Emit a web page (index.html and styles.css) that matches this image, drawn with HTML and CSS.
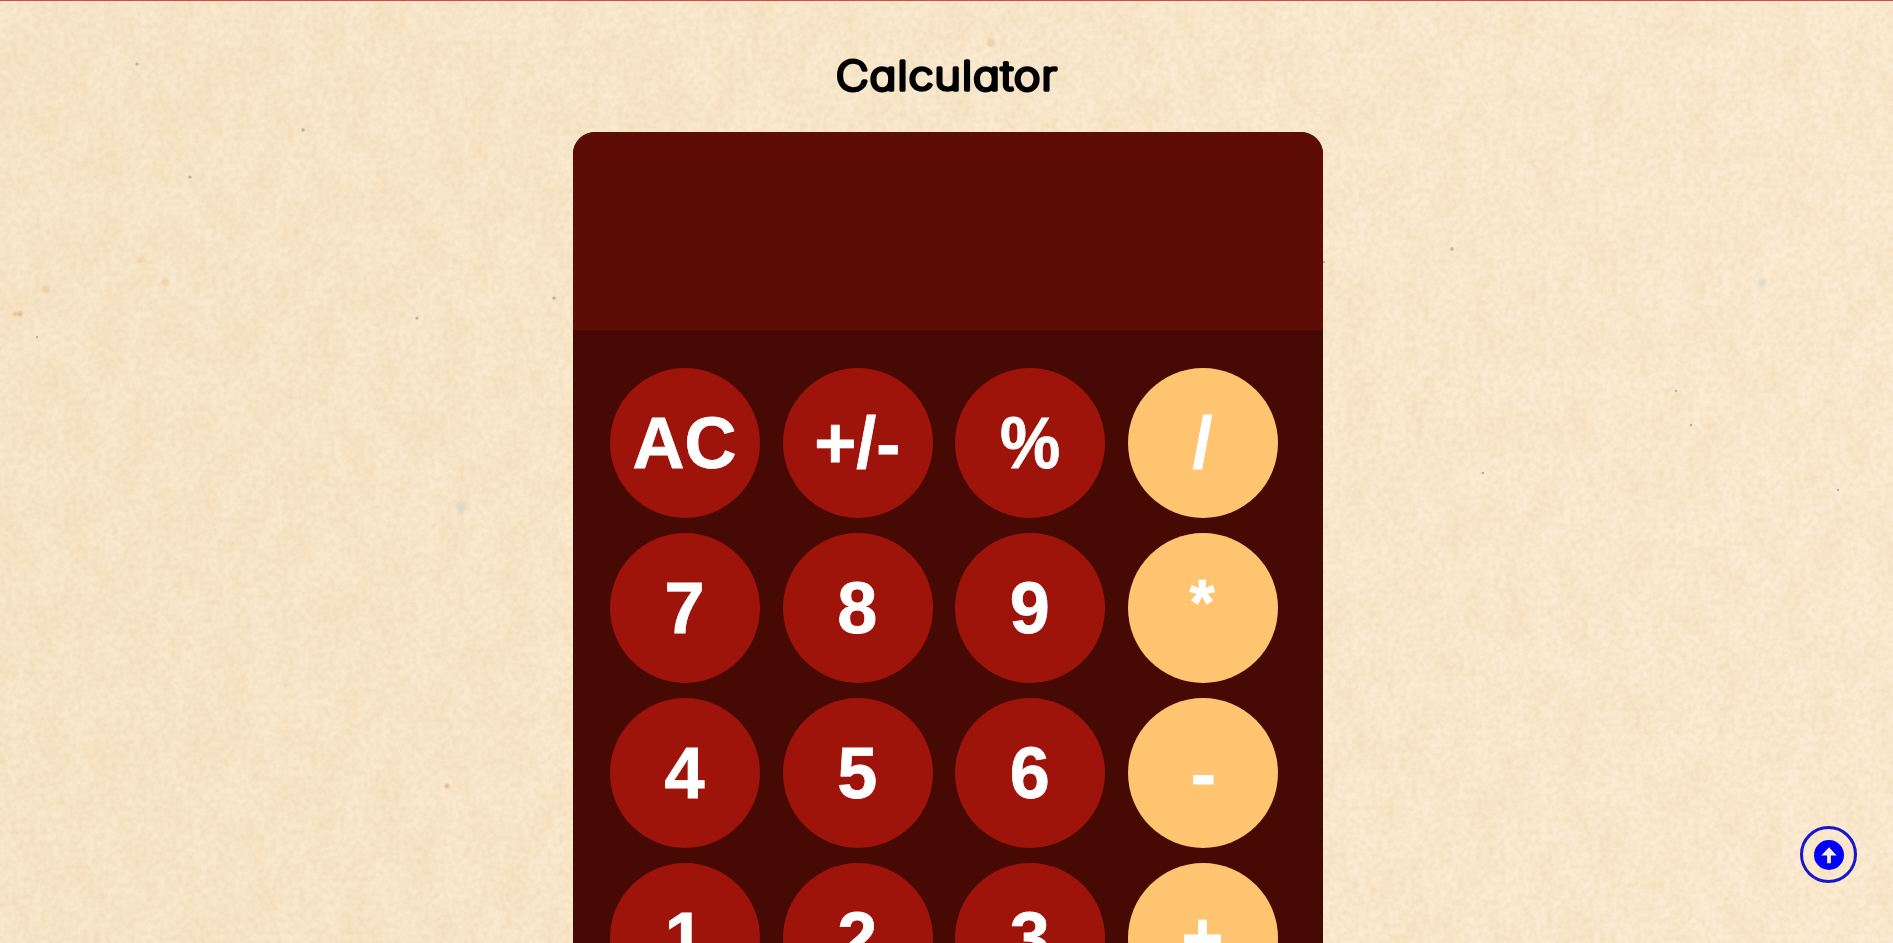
FILE: index.html
```html
<!DOCTYPE html>
<html lang="en">
<head>
<meta charset="utf-8">
<title>Calculator</title>
<link rel="stylesheet" href="styles.css">
</head>
<body>
<svg class="paper" width="1893" height="943" aria-hidden="true">
  <filter id="grain" x="0" y="0" width="100%" height="100%" color-interpolation-filters="sRGB">
    <feTurbulence type="fractalNoise" baseFrequency="0.17" numOctaves="4" seed="4"/>
    <feColorMatrix values="0 0 0 0 .86  0 0 0 0 .74  0 0 0 0 .52  .42 0 0 0 -.15"/>
    <feGaussianBlur stdDeviation="0.6"/>
  </filter>
  <filter id="blotch" x="0" y="0" width="100%" height="100%" color-interpolation-filters="sRGB">
    <feTurbulence type="fractalNoise" baseFrequency="0.032 0.022" numOctaves="4" seed="9"/>
    <feColorMatrix values="0 0 0 0 .93  0 0 0 0 .79  0 0 0 0 .58  .34 0 0 0 -.12"/>
  </filter>
  <linearGradient id="shade"><stop offset="0" stop-color="#f9e8cd"/><stop offset="1" stop-color="#fcecd4"/></linearGradient>
  <rect width="1893" height="943" fill="url(#shade)"/>
  <rect width="1893" height="943" filter="url(#blotch)"/>
  <rect width="1893" height="943" filter="url(#grain)"/>
  <g class="specks">
    <circle cx="137" cy="64" r="1.6"/><circle cx="303" cy="130" r="1.7"/><circle cx="190" cy="177" r="1.6"/>
    <circle cx="1452" cy="249" r="1.7"/><circle cx="1691" cy="425" r="1.3"/><circle cx="1838" cy="490" r="1.3"/>
    <circle cx="417" cy="318" r="1.6"/><circle cx="554" cy="298" r="1.6"/><circle cx="1483" cy="473" r="1.3"/>
    <circle cx="1324" cy="262" r="1.3"/><circle cx="37" cy="337" r="1.2"/><circle cx="1676" cy="391" r="1.3"/>
  </g>
  <g class="specks warm">
    <circle cx="15" cy="314" r="1.8"/><circle cx="20" cy="314" r="2"/><circle cx="447" cy="786" r="2"/>
    <circle cx="140" cy="260" r="3" opacity=".3"/><circle cx="46" cy="289" r="4" opacity=".3"/><circle cx="165" cy="283" r="4" opacity=".3"/>
    <circle cx="991" cy="43" r="4" opacity=".4"/>
  </g>
  <circle class="haze" cx="1762" cy="283" r="4"/><circle class="haze" cx="461" cy="507" r="5"/>
</svg>
<div class="rule"></div>
<main class="page">
  <h1 class="title">
    <svg class="title-art" width="240" height="60"><text x="8" y="43.5" textLength="222" lengthAdjust="spacingAndGlyphs">Calculator</text></svg>
  </h1>
  <section class="calculator">
    <div class="display"></div>
    <div class="keys">
      <button class="key">AC</button><button class="key">+/-</button><button class="key"><span class="percent">%</span></button><button class="key op">/</button>
      <button class="key">7</button><button class="key">8</button><button class="key">9</button><button class="key op"><span class="times">*</span></button>
      <button class="key">4</button><button class="key">5</button><button class="key">6</button><button class="key op"><span class="minus">-</span></button>
      <button class="key">1</button><button class="key">2</button><button class="key">3</button><button class="key op">+</button>
    </div>
  </section>
</main>
<a class="to-top" href="#" aria-label="Back to top">
  <svg width="30" height="30" viewBox="0 0 30 30"><circle cx="15" cy="15" r="15" fill="#00f"/><path d="M15 7.3 22.7 15.5H16.9V23.2H13.1V15.5H7.3Z" fill="#fbecd3"/></svg>
</a>
</body>
</html>
```
FILE: styles.css
```css
* { box-sizing: border-box; }
html, body { height: 100%; }
body { margin: 0; overflow: hidden; background: #f8e8cc; font-family: "Liberation Sans", Arial, sans-serif; }
.paper { position: absolute; inset: 0; z-index: -1; }
.specks { fill: #8f8574; opacity: .55; filter: blur(.6px); }
.specks.warm { fill: #cf8f4d; opacity: .65; filter: blur(.9px); }
.haze { fill: #b9c4ba; opacity: .45; filter: blur(2px); }
.rule { height: 1px; background: #c64f52; }
.page { display: flex; flex-direction: column; width: 750px; height: 942px; margin-left: 573px; }
.title { display: flex; flex: none; justify-content: center; height: 131px; margin: 0; padding-top: 45px; }
.title-art { overflow: visible; }
.title-art text {
  font: 200 40px Inter, sans-serif;
  font-feature-settings: "cv11";
  letter-spacing: 1.1px;
  fill: #000; stroke: #000; stroke-width: 3.7px; stroke-linejoin: round;
}
.calculator { flex: 1; min-height: 0; overflow: hidden; border-radius: 22px 22px 0 0; background: #470903; }
.display { height: 198px; background: #5e0c06; }
.keys { display: grid; grid-template-columns: repeat(4, 150px); gap: 15px 22.67px; padding: 38px 0 0 37px; }
.key {
  height: 150px; padding: 0 1px 0 0; border: 0; border-radius: 50%;
  background: #9e140b; color: #fff; font: bold 72px "Liberation Sans", Arial, sans-serif;
  -webkit-text-stroke: .8px #fff;
}
.op { background: #ffc46f; }
.percent, .times, .minus { display: inline-block; }
.percent { transform: scaleX(.94); }
.times { transform: translateY(-5px) scale(.9); }
.minus { transform: translateX(1.5px) scaleX(1.06); }
.to-top {
  position: fixed; left: 1800px; top: 826px; width: 57px; height: 57px;
  display: grid; place-items: center; border: 3px solid #1717cc; border-radius: 50%;
}
```
